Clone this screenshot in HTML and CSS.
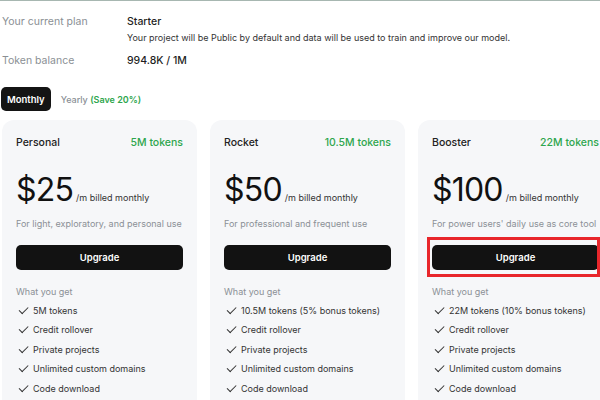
FILE: index.html
```html
<!DOCTYPE html>
<html lang="en">
<head>
  <meta charset="UTF-8">
  <meta name="viewport" content="width=device-width, initial-scale=1.0">
  <title>Plans</title>
  <link rel="stylesheet" href="styles.css">
</head>
<body>
  <section class="account">
    <div class="info-row">
      <div class="info-label">Your current plan</div>
      <div>
        <div class="info-value">Starter</div>
        <div class="info-note">Your project will be Public by default and data will be used to train and improve our model.</div>
      </div>
    </div>
    <div class="info-row">
      <div class="info-label">Token balance</div>
      <div class="info-value">994.8K / 1M</div>
    </div>
  </section>

  <div class="billing-toggle">
    <button class="toggle-btn active">Monthly</button>
    <span class="toggle-alt">Yearly <span class="save">(Save 20%)</span></span>
  </div>

  <div class="plans">
    <div class="plan-card">
      <div class="plan-head">
        <span class="plan-name">Personal</span>
        <span class="plan-tokens">5M tokens</span>
      </div>
      <div class="plan-price"><span class="amount">$25</span><span class="period">/m billed monthly</span></div>
      <p class="plan-desc">For light, exploratory, and personal use</p>
      <button class="upgrade-btn">Upgrade</button>
      <p class="features-title">What you get</p>
      <ul class="features">
        <li>5M tokens</li>
        <li>Credit rollover</li>
        <li>Private projects</li>
        <li>Unlimited custom domains</li>
        <li>Code download</li>
      </ul>
    </div>

    <div class="plan-card">
      <div class="plan-head">
        <span class="plan-name">Rocket</span>
        <span class="plan-tokens">10.5M tokens</span>
      </div>
      <div class="plan-price"><span class="amount">$50</span><span class="period">/m billed monthly</span></div>
      <p class="plan-desc">For professional and frequent use</p>
      <button class="upgrade-btn">Upgrade</button>
      <p class="features-title">What you get</p>
      <ul class="features">
        <li>10.5M tokens (5% bonus tokens)</li>
        <li>Credit rollover</li>
        <li>Private projects</li>
        <li>Unlimited custom domains</li>
        <li>Code download</li>
      </ul>
    </div>

    <div class="plan-card">
      <div class="plan-head">
        <span class="plan-name">Booster</span>
        <span class="plan-tokens">22M tokens</span>
      </div>
      <div class="plan-price"><span class="amount">$100</span><span class="period">/m billed monthly</span></div>
      <p class="plan-desc">For power users' daily use as core tool</p>
      <div class="highlight">
        <button class="upgrade-btn">Upgrade</button>
      </div>
      <p class="features-title">What you get</p>
      <ul class="features">
        <li>22M tokens (10% bonus tokens)</li>
        <li>Credit rollover</li>
        <li>Private projects</li>
        <li>Unlimited custom domains</li>
        <li>Code download</li>
      </ul>
    </div>
  </div>
</body>
</html>
```

FILE: styles.css
```css
body {
  margin: 0;
  font-family: 'Inter', 'Liberation Sans', sans-serif;
  color: #1a1a1a;
  background: #fff;
  border-top: 1px solid #a7b7b1;
  overflow: hidden;
  width: 600px;
  height: 399px;
}

.account {
  display: grid;
  row-gap: 10px;
  padding: 14px 0 0 2px;
}

.info-row {
  display: grid;
  grid-template-columns: 125px 1fr;
}

.info-label {
  font-size: 10.5px;
  line-height: 14px;
  color: #8a8f94;
}

.info-value {
  font-size: 10.5px;
  line-height: 14px;
  font-weight: 500;
  color: #1f1f1f;
}

.info-note {
  font-size: 9px;
  line-height: 12px;
  margin-top: 3px;
  color: #333;
}

.billing-toggle {
  display: flex;
  align-items: center;
  gap: 10px;
  margin: 19px 0 0 1px;
}

.toggle-btn {
  border: none;
  border-radius: 5px;
  background: #141414;
  color: #fff;
  font-family: inherit;
  font-size: 9.5px;
  font-weight: 600;
  height: 24px;
  padding: 0 6px;
}

.toggle-alt {
  font-size: 9px;
  font-weight: 500;
  color: #8b9096;
}

.save {
  color: #2ea64d;
  font-weight: 600;
}

.plans {
  display: flex;
  gap: 13px;
  margin: 9px 0 0 2px;
}

.plan-card {
  flex: 0 0 195px;
  width: 195px;
  min-width: 0;
  box-sizing: border-box;
  background: #f6f7f9;
  border-radius: 12px;
  padding: 16px 14px 20px;
}

.plan-head {
  display: flex;
  justify-content: space-between;
  font-size: 10.5px;
  line-height: 14px;
  font-weight: 500;
}

.plan-name {
  color: #222;
}

.plan-tokens {
  color: #2ea64d;
  white-space: nowrap;
}

.plan-price {
  display: flex;
  align-items: baseline;
  gap: 3px;
  margin-top: 20px;
}

.amount {
  font-size: 32px;
  line-height: 40px;
  letter-spacing: -0.8px;
  color: #111;
}

.period {
  font-size: 9px;
  color: #333;
}

.plan-desc {
  margin: 8px 0 0;
  font-size: 9px;
  line-height: 12px;
  color: #8b9096;
  white-space: nowrap;
}

.upgrade-btn {
  display: block;
  width: 100%;
  height: 25px;
  margin-top: 15px;
  border: none;
  border-radius: 5px;
  background: #121212;
  color: #fff;
  font-family: inherit;
  font-size: 9.5px;
  font-weight: 600;
}

.highlight {
  position: relative;
  margin-top: 15px;
}

.highlight .upgrade-btn {
  margin-top: 0;
}

.highlight::after {
  content: "";
  position: absolute;
  top: -8px;
  left: -5px;
  right: -1px;
  bottom: -7px;
  border: 3px solid #e8262b;
}

.features-title {
  margin: 16px 0 0;
  font-size: 9px;
  line-height: 12px;
  color: #8b9096;
}

.features {
  list-style: none;
  margin: 3px 0 0;
  padding: 0;
}

.features li {
  position: relative;
  padding-left: 17px;
  font-size: 9px;
  line-height: 19.4px;
  color: #333;
  white-space: nowrap;
}

.features li::before {
  content: "";
  position: absolute;
  left: 3px;
  top: 6px;
  width: 7.5px;
  height: 3.5px;
  border-left: 1.5px solid #333;
  border-bottom: 1.5px solid #333;
  transform: rotate(-45deg);
}
```
